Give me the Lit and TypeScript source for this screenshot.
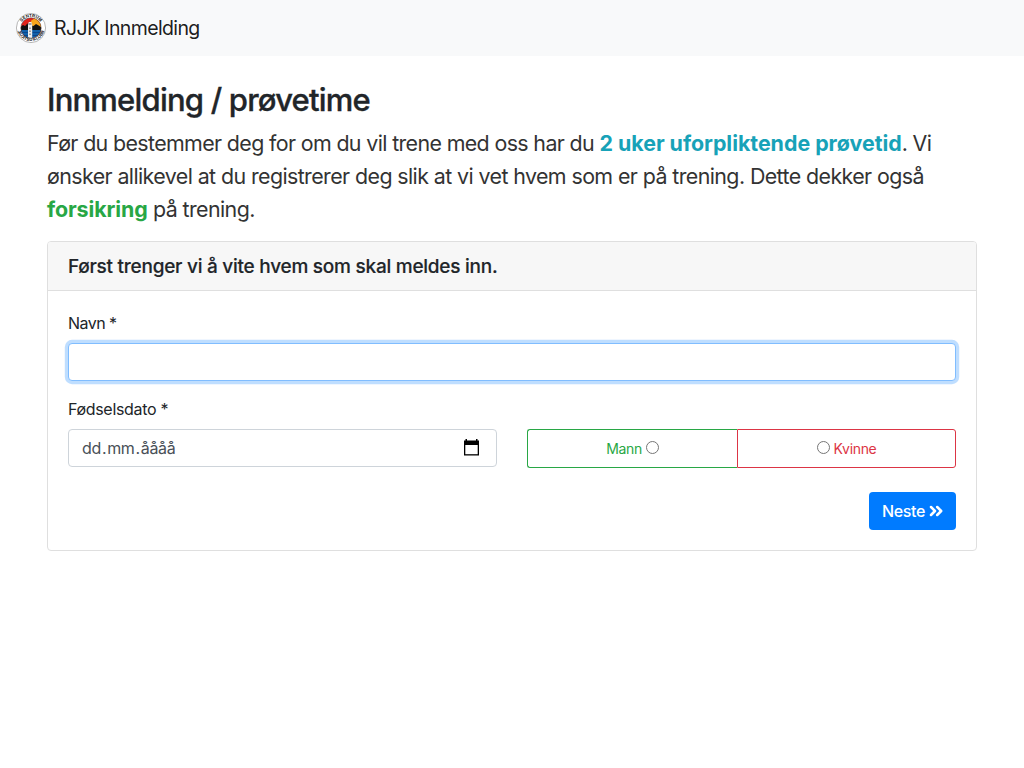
import { LitElement, html, css } from "lit";
import { customElement } from "lit/decorators.js";

@customElement("club-logo")
class ClubLogo extends LitElement {
  static styles = css`
    :host { display: block; width: 30px; height: 30px; }
    svg { display: block; }
    text { font: 700 4.4px "Liberation Sans", sans-serif; fill: #111; }
  `;
  render() {
    return html`<svg width="30" height="30" viewBox="0 0 30 30">
      <defs>
        <clipPath id="disc"><circle cx="15" cy="15" r="10.2" /></clipPath>
        <path id="top" d="M4 15a11 11 0 0 1 22 0" />
        <path id="bottom" d="M.9 14a14.100 14.100 0 0 0 28.200 0" />
      </defs>
      <circle cx="15" cy="15" r="14.600" fill="#fff" stroke="#888" stroke-width=".6" />
      <g clip-path="url(#disc)">
        <rect width="30" height="30" fill="#e2231a" />
        <circle cx="20" cy="11.500" r="6" fill="#f9a51a" />
        <path d="M4 14l3-2 2 1 2.500-2.500 3.500 2 2.500.5 2.500-2 3.500 2 4 3v2.500H4z" fill="#111" />
        <rect y="17" width="30" height="13" fill="#1261ab" />
        <path d="M4 19.500h22M4 22.500h22" stroke="#0a3f83" stroke-width=".8" />
        <path d="M12 25.500V11.500l.8-2.500h2.600l.8 2.500v14z" fill="#eee" />
        <path d="M12.500 11h3M14 14.500v1.500M14 17.500v1.500M14 20.500v1.500" stroke="#555" stroke-width="1" />
      </g>
      <circle cx="15" cy="15" r="10.200" fill="none" stroke="#444" stroke-width=".5" />
      <text><textPath href="#top" startOffset="50%" text-anchor="middle">SENTRUM</textPath></text>
      <text><textPath href="#bottom" startOffset="50%" text-anchor="middle">JIUJITSU KLUBB</textPath></text>
    </svg>`;
  }
}

@customElement("app-root")
class AppRoot extends LitElement {
  static styles = css`
    :host {
      display: block;
      min-height: 768px;
      background: #fff;
      color: #212529;
      font: 400 16px/24px Inter, sans-serif;
    }
    * { box-sizing: border-box; }
    .navbar {
      display: flex;
      align-items: center;
      height: 56px;
      padding: 0 16px;
      gap: 8px;
      background: #f8f9fa;
    }
    .brand { font-size: 19.5px; line-height: 30px; letter-spacing: -0.62px; color: rgba(0, 0, 0, 0.9); white-space: nowrap; }
    .container { padding: 25px 47px 24px; }
    h2 { margin: 0 0 8px; font-size: 31px; font-weight: 540; line-height: 38.4px; letter-spacing: -0.79px; -webkit-text-stroke: 0.35px; white-space: nowrap; }
    .lead { margin: 0 0 15px; font-size: 21.4px; line-height: 33px; color: #333; white-space: nowrap; }
    .line { display: block; width: max-content; letter-spacing: -0.59px; }
    .first { letter-spacing: -0.63px; }
    .info { color: #17a2b8; font-weight: 700; letter-spacing: -0.02px; }
    .success { color: #28a745; font-weight: 700; letter-spacing: -0.1px; }
    .card { border: 1px solid #dfdfdf; border-radius: 4px; }
    .card-header {
      padding: 13px 20px 11px;
      background: #f7f7f7;
      border-bottom: 1px solid #dfdfdf;
      border-radius: 3px 3px 0 0;
      font-size: 19px;
      font-weight: 540;
      -webkit-text-stroke: 0.15px;
      white-space: nowrap;
    }
    .card-header span { letter-spacing: -0.25px; }
    .card-body { padding: 20px; }
    .label { display: block; width: max-content; margin-bottom: 8px; letter-spacing: -0.32px; }
    .name { letter-spacing: -0.55px; }
    .control {
      display: flex;
      align-items: center;
      width: 100%;
      height: 38px;
      padding: 0 13px;
      border: 1px solid #ced4da;
      border-radius: 4px;
      background: #fff;
      color: #495057;
      font: inherit;
      outline: none;
    }
    .focused { border-color: #80bdff; box-shadow: 0 0 0 3.2px rgba(0, 123, 255, 0.25); margin-bottom: 16px; }
    .row { display: grid; grid-template-columns: 1fr 1fr; gap: 30px; align-items: start; }
    .date { justify-content: space-between; padding-right: 16px; }
    .datetext { letter-spacing: -0.35px; }
    .dot { margin: 0 1px; }
    .group { display: flex; padding-top: 32px; }
    .option {
      display: flex;
      align-items: center;
      justify-content: center;
      gap: 4px;
      height: 39px;
      border: 1px solid;
      font-size: 14px;
      line-height: 21px;
    }
    .option span { letter-spacing: -0.33px; }
    .mann { width: 210px; color: #28a745; border-right: 0; border-radius: 3px 0 0 3px; }
    .kvinne { flex: 1; color: #dc3545; border-radius: 0 3px 3px 0; }
    .radio { width: 13px; height: 13px; margin-top: -2px; border: 1px solid #767676; border-radius: 50%; background: #fff; }
    .actions { display: flex; justify-content: flex-end; margin-top: 24px; }
    .next {
      display: flex;
      align-items: center;
      justify-content: center;
      gap: 4px;
      width: 87px;
      height: 38px;
      padding: 0;
      border: 0;
      border-radius: 4px;
      background: #007bff;
      color: #fff;
      font: inherit;
    }
    .next span { font-weight: 500; letter-spacing: -0.4px; }
    svg { display: block; }
  `;

  render() {
    return html`
      <nav class="navbar"><club-logo></club-logo><span class="brand">RJJK Innmelding</span></nav>
      <main class="container">
        <h2>Innmelding / prøvetime</h2>
        <p class="lead">
          <span class="line first">Før du bestemmer deg for om du vil trene med oss har du <b class="info">2 uker uforpliktende prøvetid</b>. Vi</span>
          <span class="line">ønsker allikevel at du registrerer deg slik at vi vet hvem som er på trening. Dette dekker også</span>
          <span class="line"><b class="success">forsikring</b> på trening.</span>
        </p>
        <section class="card">
          <div class="card-header"><span>Først trenger vi å vite hvem som skal meldes inn.</span></div>
          <div class="card-body">
            <label class="label name" for="name">Navn *</label>
            <input id="name" class="control focused" type="text" />
            <div class="row">
              <div>
                <span class="label">Fødselsdato *</span>
                <div class="control date">
                  <span class="datetext">dd<span class="dot">.</span>mm<span class="dot">.</span>åååå</span>
                  <svg width="17" height="18" viewBox="0 0 17 18">
                    <path d="M2.500 0H4v1.500h9V0h1.500v1.500H16v15H1v-15h1.500z" fill="#000" />
                    <path d="M2.300 6h12.400v9.200H2.300z" fill="#fff" />
                  </svg>
                </div>
              </div>
              <div class="group">
                <div class="option mann"><span>Mann</span><i class="radio"></i></div>
                <div class="option kvinne"><i class="radio"></i><span>Kvinne</span></div>
              </div>
            </div>
            <div class="actions">
              <button class="next" type="button"><span>Neste</span>
                <svg width="14" height="12" viewBox="0 0 14 12" fill="none" stroke="#fff" stroke-width="2.500" stroke-linecap="round" stroke-linejoin="round">
                  <path d="M2 2L6 6l-4 4M8.200 2L12.200 6l-4 4" />
                </svg>
              </button>
            </div>
          </div>
        </section>
      </main>
    `;
  }
}
